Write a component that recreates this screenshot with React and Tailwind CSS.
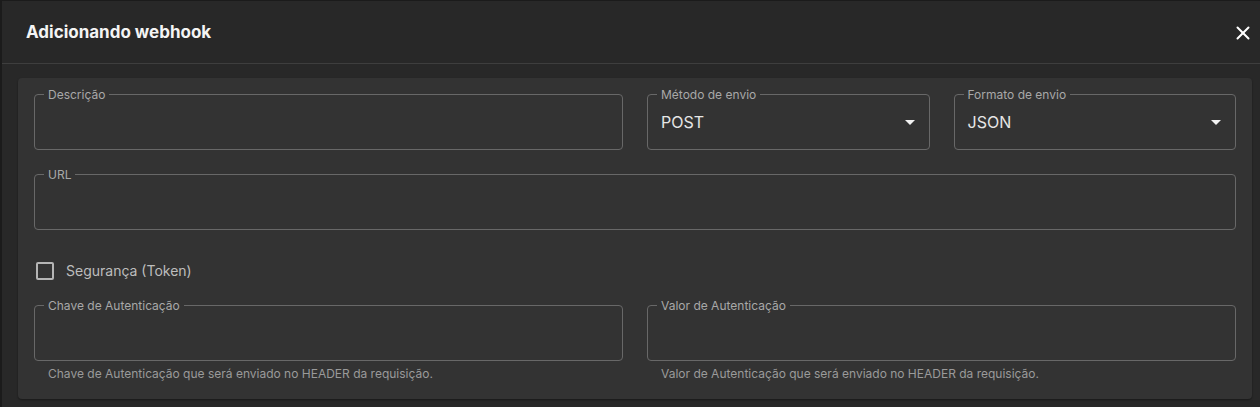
import { X } from "lucide-react";

function Field({ label, value, select = false, helper = "" }) {
  return (
    <div className="flex min-w-0 flex-1 flex-col">
      <div className="relative flex h-[56px] items-center rounded-[4px] border border-[#686868] px-[13px]">
        <span className="absolute -top-[8px] left-[9px] bg-[#333333] px-[4px] text-[12px] leading-[16px] text-[#a8a8a8]">
          {label}
        </span>
        <span className="flex-1 text-[16px] text-[#e6e6e6]">{value}</span>
        {select ? (
          <svg width="10" height="5" viewBox="0 0 10 5" className="mr-[1px]">
            <path d="M0 0h10L5 5z" fill="#f2f2f2" />
          </svg>
        ) : null}
      </div>
      {helper ? (
        <p className="mt-[3px] px-[14px] text-[12px] leading-[20px] text-[#9a9a9a]">{helper}</p>
      ) : null}
    </div>
  );
}

export default function App() {
  return (
    <div
      className="flex h-[407px] w-[1260px] overflow-hidden bg-[#1b1b1b]"
      style={{ fontFamily: "Inter, 'Noto Sans', sans-serif" }}
    >
      <div className="ml-[2px] mt-[1px] flex flex-1 flex-col bg-[#282828]">
        <div className="flex h-[63px] shrink-0 items-center justify-between border-b border-[#3e3e3e] pl-[24px] pr-[6px] pt-[1px]">
          <h2 className="text-[17px] font-bold text-[#f4f4f4]">Adicionando webhook</h2>
          <X className="h-[22px] w-[22px] text-white" strokeWidth={2.2} />
        </div>
        <div className="flex flex-1 pb-[8px] pl-[16px] pr-[8px] pt-[14px]">
          <div className="flex flex-1 flex-col rounded-[4px] bg-[#333333] px-[16px] pb-[15px] pt-[16px] shadow-[0_1px_2px_rgba(0,0,0,0.4)]">
            <div className="flex gap-[24px]">
              <Field label="Descrição" value="" />
              <div className="flex flex-1 gap-[24px]">
                <Field label="Método de envio" value="POST" select />
                <Field label="Formato de envio" value="JSON" select />
              </div>
            </div>
            <div className="mt-[24px] flex">
              <Field label="URL" value="" />
            </div>
            <label className="mt-[30px] mb-[24px] flex items-center gap-[12px] pl-[2px]">
              <span className="h-[18px] w-[18px] rounded-[2px] border-2 border-[#b5b5b5]" />
              <span className="text-[14px] text-[#bdbdbd]">Segurança (Token)</span>
            </label>
            <div className="flex gap-[24px]">
              <Field
                label="Chave de Autenticação"
                value=""
                helper="Chave de Autenticação que será enviado no HEADER da requisição."
              />
              <Field
                label="Valor de Autenticação"
                value=""
                helper="Valor de Autenticação que será enviado no HEADER da requisição."
              />
            </div>
          </div>
        </div>
      </div>
    </div>
  );
}
